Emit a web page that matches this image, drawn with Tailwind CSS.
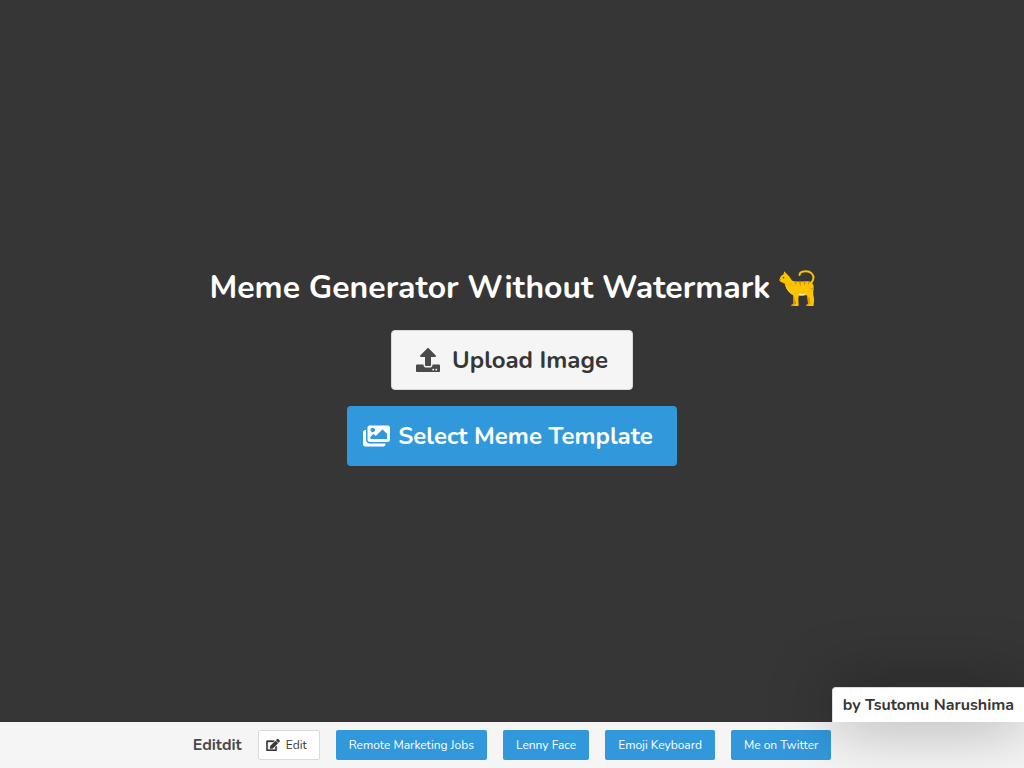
<!DOCTYPE html>
<html lang="en">
<head>
    <meta charset="UTF-8">
    <meta name="viewport" content="width=device-width, initial-scale=1.0">
    <title>Meme Generator Without Watermark</title>
    <script src="https://cdn.jsdelivr.net/npm/@tailwindcss/browser@4"></script>
</head>
<body class="min-h-screen flex flex-col overflow-x-hidden bg-[#363636] font-['Nunito','Lato',sans-serif] text-[#363636]">
    <!-- Hero -->
    <main class="grow flex flex-col items-center justify-center pt-[14px]">
        <h1 class="flex items-center gap-2 mb-6 text-[32px] leading-9 font-bold text-white">
            Meme Generator Without Watermark
            <svg class="w-9 h-9" viewBox="0 0 36 36" fill="none" aria-hidden="true">
                <path d="M20.5 5C20.5 2.5 23.2 1.2 27 1.2C31.5 1.2 35 4.5 34.4 8.5C34 11.7 30.8 13.2 30.8 17" stroke="#fcc400" stroke-width="2" stroke-linecap="round"/>
                <path d="M13 23L21 23L16.5 31.5L16.5 36H12.2C12 34.6 13 34 14.2 33.8L14 25Z" fill="#e59600"/>
                <path d="M27 22L32 26L31.5 36H27C27 34.5 28 34 29 33.7L28 27Z" fill="#e59600"/>
                <path d="M5.2 1.2L8.3 4.6C10.5 6.2 11.2 8.2 13 10.6C17 12.4 24 10.8 29 11.2C33 11.8 35 14.6 34.7 18C34.5 21 33.8 23 34.5 26C35.2 28.3 35.2 29.5 35 31.5L34.5 36H29.2C29.2 34.6 30.2 34 31.2 33.8L31 28.5L27.5 25C25 26 22.5 25.6 20 25.2L19.3 28L19.6 36H14.8C14.8 34.6 15.7 34 16.8 33.7L15.2 25.8C9.8 23.8 7 18.6 5.8 13.6C3.8 12.7 1.2 12.2 .4 10.5C.1 9.7.5 8.8 1 8.3C1.2 6.7 2.5 5.3 4.4 4.5Z" fill="#fcc400"/>
                <path d="M15.2 11.6L17 15.4L17.8 11.7ZM19.8 11.6L21.3 16.4L22.3 11.4ZM24.2 11.3L25.7 16.2L26.8 11.2ZM28.6 11.3L29.5 15.4L30.8 11.8ZM34.8 17.7L30.7 18.5L34.5 19.7Z" fill="#e08a00"/>
                <path d="M5.5 12.8C7 18 10 21.8 14.4 23.4C9.5 22.5 6.4 18.3 5.5 12.8ZM19.8 23.6C22 24.2 24.8 23.8 26.8 23.6C25 25.8 22 25.8 19.8 25.2Z" fill="#fff0b0"/>
                <circle cx="4.5" cy="7.8" r=".8" fill="#453b20"/>
                <path d="M.3 9L1.8 9.2L.8 10.2Z" fill="#885b3c"/>
            </svg>
        </h1>
        <div class="flex flex-col items-center gap-4 text-2xl font-bold">
            <button type="button" class="flex items-center gap-3 h-15 px-6 rounded-sm border border-[#dbdbdb] bg-[#f5f5f5]">
                <svg class="w-6 h-6 text-[#4a4a4a]" viewBox="0 0 512 512" fill="currentColor" aria-hidden="true">
                    <path d="M296 384h-80c-13.3 0-24-10.7-24-24V192h-87.7c-17.8 0-26.7-21.5-14.1-34.1L242.3 5.7c7.5-7.5 19.8-7.5 27.3 0l152.2 152.2c12.6 12.6 3.7 34.1-14.1 34.1H320v168c0 13.3-10.7 24-24 24zm216-8v112c0 13.3-10.7 24-24 24H24c-13.3 0-24-10.7-24-24V376c0-13.3 10.7-24 24-24h136v8c0 30.9 25.1 56 56 56h80c30.9 0 56-25.1 56-56v-8h136c13.3 0 24 10.7 24 24zm-124 88c0-11-9-20-20-20s-20 9-20 20 9 20 20 20 20-9 20-20zm64 0c0-11-9-20-20-20s-20 9-20 20 9 20 20 20 20-9 20-20z"/>
                </svg>
                Upload Image
            </button>
            <button type="button" class="flex items-center gap-2 h-15 pl-4 pr-6 rounded-sm bg-[#3298dc] text-white">
                <svg class="w-[27px] h-6" viewBox="0 0 576 512" fill="currentColor" aria-hidden="true">
                    <path d="M480 416v16c0 26.51-21.49 48-48 48H48c-26.51 0-48-21.49-48-48V176c0-26.51 21.49-48 48-48h16v208c0 44.112 35.888 80 80 80h336zm96-80V80c0-26.51-21.49-48-48-48H144c-26.51 0-48 21.49-48 48v256c0 26.51 21.49 48 48 48h384c26.51 0 48-21.49 48-48zM256 128c0 26.51-21.49 48-48 48s-48-21.49-48-48 21.49-48 48-48 48 21.49 48 48zm-96 144l55.515-55.515c4.686-4.686 12.284-4.686 16.971 0L272 256l135.515-135.515c4.686-4.686 12.284-4.686 16.971 0L512 208v112H160v-48z"/>
                </svg>
                Select Meme Template
            </button>
        </div>
    </main>

    <!-- Footer -->
    <footer class="relative flex items-center justify-center gap-4 p-2 bg-[#f5f5f5] text-xs">
        <strong class="text-base leading-6 font-bold text-[#4a4a4a]">Editdit</strong>
        <button type="button" class="flex items-center gap-[6px] h-[30px] pl-[7px] pr-3 rounded-xs border border-[#dbdbdb] bg-white">
            <svg class="w-[14px] h-3" viewBox="0 0 576 512" fill="currentColor" stroke="currentColor" stroke-width="12" aria-hidden="true">
                <path d="M402.6 83.2l90.2 90.2c3.8 3.8 3.8 10 0 13.8L274.4 405.6l-92.8 10.3c-12.4 1.4-22.9-9.1-21.5-21.5l10.3-92.8L388.8 83.2c3.8-3.8 10-3.8 13.8 0zm162-22.9l-48.8-48.8c-15.2-15.2-39.9-15.2-55.2 0l-35.4 35.4c-3.8 3.8-3.8 10 0 13.8l90.2 90.2c3.8 3.8 10 3.8 13.8 0l35.4-35.4c15.2-15.3 15.2-40 0-55.2zM384 346.2V448H64V128h229.8c3.2 0 6.2-1.3 8.5-3.5l40-40c7.6-7.6 2.2-20.5-8.5-20.5H48C21.5 64 0 85.5 0 112v352c0 26.5 21.5 48 48 48h352c26.5 0 48-21.5 48-48V306.2c0-10.7-12.9-16-20.5-8.5l-40 40c-2.2 2.3-3.5 5.3-3.5 8.5z"/>
            </svg>
            Edit
        </button>
        <a href="#jobs" class="flex items-center h-[30px] px-[13px] rounded-xs bg-[#3298dc] text-white">Remote Marketing Jobs</a>
        <a href="#lenny" class="flex items-center h-[30px] px-[13px] rounded-xs bg-[#3298dc] text-white">Lenny Face</a>
        <a href="#emoji" class="flex items-center h-[30px] px-[13px] rounded-xs bg-[#3298dc] text-white">Emoji Keyboard</a>
        <a href="#twitter" class="flex items-center h-[30px] px-[13px] rounded-xs bg-[#3298dc] text-white">Me on Twitter</a>

        <!-- Author tab, sits on top of the footer edge -->
        <a href="#author" class="absolute right-0 bottom-full flex items-center h-[35px] px-[10px] rounded-tl-sm border-t border-l border-[#dbdbdb] bg-white text-base font-bold whitespace-nowrap shadow-[0_0_64px_rgba(0,0,0,0.4)]">by Tsutomu Narushima</a>
    </footer>
</body>
</html>
